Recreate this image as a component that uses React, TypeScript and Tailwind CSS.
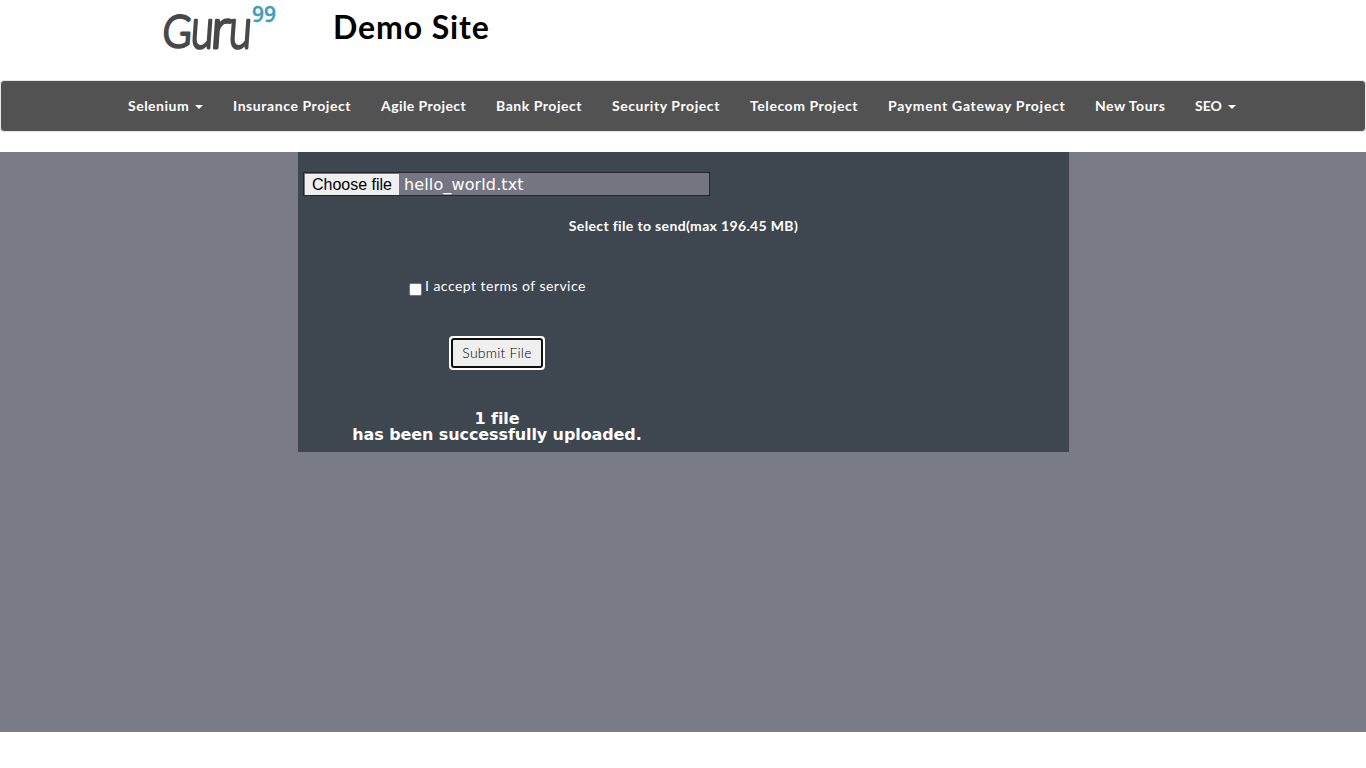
type NavItem = { label: string; box: string; tracking: string; menu?: boolean };

const navItems: NavItem[] = [
  { label: "Selenium", box: "w-[75px]", tracking: "tracking-[0.5px]", menu: true },
  { label: "Insurance Project", box: "w-[118px]", tracking: "tracking-[0.58px]" },
  { label: "Agile Project", box: "w-[85px]", tracking: "tracking-[0.42px]" },
  { label: "Bank Project", box: "w-[86px]", tracking: "tracking-[0.54px]" },
  { label: "Security Project", box: "w-[108px]", tracking: "tracking-[0.57px]" },
  { label: "Telecom Project", box: "w-[108px]", tracking: "tracking-[0.57px]" },
  { label: "Payment Gateway Project", box: "w-[177px]", tracking: "tracking-[0.71px]" },
  { label: "New Tours", box: "w-[70px]", tracking: "tracking-[0.5px]" },
  { label: "SEO", box: "w-[41px]", tracking: "tracking-[0px]", menu: true },
];

function Logo() {
  return (
    <svg width="116" height="56" viewBox="162 0 116 56" role="img" aria-label="Guru99" className="shrink-0 overflow-visible">
      <g fill="#484848" stroke="#484848" strokeWidth="2.8" strokeLinejoin="round" fontFamily="Lato, sans-serif" fontWeight="300" transform="translate(4 0) skewX(-4)">
        <text x="161" y="47.5" fontSize="44" textLength="29" lengthAdjust="spacingAndGlyphs">G</text>
        <text x="189" y="47.5" fontSize="56" textLength="23" lengthAdjust="spacingAndGlyphs">u</text>
        <text x="209" y="47.5" fontSize="56" textLength="20" lengthAdjust="spacingAndGlyphs">r</text>
        <text x="227" y="47.5" fontSize="56" textLength="23" lengthAdjust="spacingAndGlyphs">u</text>
      </g>
      <text x="252" y="22" fill="#3f9db6" stroke="#3f9db6" strokeWidth="0.3" fontFamily="Open Sans, sans-serif" fontSize="21" fontWeight="600" textLength="24">99</text>
    </svg>
  );
}

export default function App() {
  return (
    <div className="h-[768px] overflow-hidden bg-white font-['Lato',sans-serif] text-[14px] leading-5 text-white">
      <header className="flex h-20 items-start pl-[162px]">
        <Logo />
        <h1 className="ml-[55px] mt-[9px] whitespace-nowrap text-[32px] font-bold leading-9 tracking-[0.9px] text-black">Demo Site</h1>
      </header>

      <nav className="flex h-[52px] items-center gap-[30px] rounded border border-[#e7e7e7] bg-[#525252] pl-[127px] font-bold">
        {navItems.map((item) => (
          <a key={item.label} className={`flex shrink-0 items-center whitespace-nowrap ${item.box} ${item.tracking}`}>
            {item.label}
            {item.menu && <span className="ml-auto mt-0.5 border-x-4 border-t-4 border-x-transparent border-t-white" />}
          </a>
        ))}
      </nav>

      <main className="mt-5 flex h-[580px] justify-center bg-[#797c86] pl-px">
        <form className="flex h-[300px] w-[771px] flex-col bg-[#3e464f] pt-5">
          <div className="ml-[5px] flex h-6 w-[407px] items-center border border-[#1c262d] bg-[#757682] p-px text-[16px]">
            <button type="button" className="h-[21px] w-[94px] bg-[#efefef] text-center font-['Liberation_Sans',sans-serif] leading-[21px] text-black">Choose file</button>
            <span className="ml-[5px] pt-0.5 font-['DejaVu_Sans',sans-serif] tracking-[0.13px]">hello_world.txt</span>
          </div>
          <p className="mt-5 text-center font-bold tracking-[0.35px]">
            <span>Select file to send(max 196.45 MB)</span>
          </p>
          <label className="ml-[111px] mt-10 flex h-5 items-center">
            <span className="mt-[6px] size-[13px] rounded-[2px] border border-[#767676] bg-white" />
            <span className="ml-[3px] whitespace-nowrap tracking-[0.47px]">I accept terms of service</span>
          </label>
          <button type="button" className="ml-[151px] mt-10 flex h-[34px] w-24 items-center justify-center rounded border-2 border-white bg-white">
            <span className="flex h-[30px] w-[92px] items-center justify-center rounded-[3px] border-2 border-[#101010] bg-[#efefef] font-light tracking-[0.2px] text-black">Submit File</span>
          </button>
          <div className="ml-[49px] mt-[41px] w-[300px] text-center font-['DejaVu_Sans',sans-serif] text-[16px] font-bold leading-4 tracking-[-0.1px]">
            <p>1 file</p>
            <p>has been successfully uploaded.</p>
          </div>
        </form>
      </main>
    </div>
  );
}
